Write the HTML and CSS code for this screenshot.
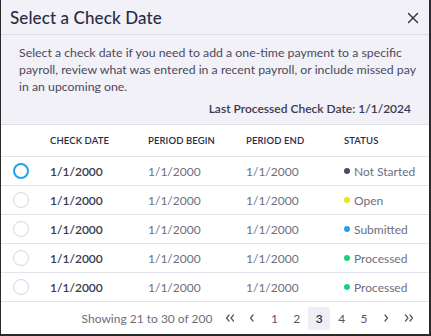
FILE: index.html
```html
<!DOCTYPE html>
<html>
<head>
<meta charset="utf-8">
<link rel="stylesheet" href="styles.css">
</head>
<body>
<div class="modal">
  <div class="head">
    <div class="titlebar">
      <h1 class="title">Select a Check Date</h1>
      <svg class="close" width="12" height="12" viewBox="0 0 12 12"><path d="M1.5 1.5L10.5 10.5M10.5 1.5L1.5 10.5" stroke="#2b2b45" stroke-width="1.4" stroke-linecap="round"/></svg>
    </div>
    <div class="intro">
      <p class="desc">Select a check date if you need to add a one-time payment to a specific payroll, review what was entered in a recent payroll, or include missed pay in an upcoming one.</p>
      <p class="last">Last Processed Check Date: 1/1/2024</p>
    </div>
  </div>
  <div class="table">
    <div class="row hrow">
      <span></span><span>CHECK DATE</span><span>PERIOD BEGIN</span><span>PERIOD END</span><span>STATUS</span>
    </div>
    <div class="row">
      <span class="radio on"></span><span class="b">1/1/2000</span><span>1/1/2000</span><span>1/1/2000</span><span class="st"><i class="dot ns"></i>Not Started</span>
    </div>
    <div class="row">
      <span class="radio"></span><span class="b">1/1/2000</span><span>1/1/2000</span><span>1/1/2000</span><span class="st"><i class="dot op"></i>Open</span>
    </div>
    <div class="row">
      <span class="radio"></span><span class="b">1/1/2000</span><span>1/1/2000</span><span>1/1/2000</span><span class="st"><i class="dot sb"></i>Submitted</span>
    </div>
    <div class="row">
      <span class="radio"></span><span class="b">1/1/2000</span><span>1/1/2000</span><span>1/1/2000</span><span class="st"><i class="dot pr"></i>Processed</span>
    </div>
    <div class="row">
      <span class="radio"></span><span class="b">1/1/2000</span><span>1/1/2000</span><span>1/1/2000</span><span class="st"><i class="dot pr"></i>Processed</span>
    </div>
  </div>
  <div class="footer">
    <span class="showing">Showing 21 to 30 of 200</span>
    <div class="pager">
      <span class="pg"><svg width="10" height="8" viewBox="0 0 10 8"><path d="M4 1L1.5 4L4 7M8.5 1L6 4L8.5 7" fill="none" stroke="#555568" stroke-width="1.2" stroke-linecap="round" stroke-linejoin="round"/></svg></span>
      <span class="pg"><svg width="6" height="8" viewBox="0 0 6 8"><path d="M4 1L1.5 4L4 7" fill="none" stroke="#555568" stroke-width="1.2" stroke-linecap="round" stroke-linejoin="round"/></svg></span>
      <span class="pg">1</span>
      <span class="pg">2</span>
      <span class="pg active">3</span>
      <span class="pg">4</span>
      <span class="pg">5</span>
      <span class="pg"><svg width="6" height="8" viewBox="0 0 6 8"><path d="M2 1L4.5 4L2 7" fill="none" stroke="#555568" stroke-width="1.2" stroke-linecap="round" stroke-linejoin="round"/></svg></span>
      <span class="pg"><svg width="10" height="8" viewBox="0 0 10 8"><path d="M1.5 1L4 4L1.5 7M6 1L8.5 4L6 7" fill="none" stroke="#555568" stroke-width="1.2" stroke-linecap="round" stroke-linejoin="round"/></svg></span>
    </div>
  </div>
</div>
</body>
</html>
```
FILE: styles.css
```css
* { box-sizing: border-box; }
html, body { margin: 0; padding: 0; }
body {
  width: 431px;
  height: 336px;
  font-family: "Lato", "Noto Sans", sans-serif;
  color: #2b2b45;
  background: #fff;
}
.modal {
  width: 431px;
  height: 336px;
  border-left: 1px solid #2a2a2a;
  border-right: 2px solid #2a2a2a;
  border-bottom: 2px solid #2a2a2a;
  display: flex;
  flex-direction: column;
  overflow: hidden;
}
.head {
  background: #f1f1f7;
  border-bottom: 1px solid #dedee8;
}
.titlebar {
  height: 35px;
  padding: 0 10px 0 9px;
  display: flex;
  align-items: center;
  justify-content: space-between;
  border-bottom: 1px solid #dcdce6;
}
.title {
  margin: 0;
  font-size: 17px;
  font-weight: 500;
  letter-spacing: 0.1px;
}
.close { margin-top: 1px; }
.intro {
  padding: 9px 12px 8px 18px;
}
.desc {
  margin: 0;
  font-size: 12.3px;
  line-height: 17px;
  color: #4a4a5e;
}
.last {
  margin: 6px 6px 0 0;
  text-align: right;
  font-size: 12px;
  font-weight: 600;
  color: #3a3a50;
}
.table { background: #fff; }
.row {
  display: grid;
  grid-template-columns: 49px 98px 98px 98px 1fr;
  align-items: center;
  height: 29px;
  border-bottom: 1px solid #e4e4ee;
  font-size: 12px;
  color: #6e6e80;
}
.hrow {
  height: 32px;
  font-size: 9.5px;
  font-weight: 600;
  color: #2b2b45;
  letter-spacing: 0.1px;
}
.b { font-weight: 600; color: #3a3a50; }
.radio {
  width: 16px;
  height: 16px;
  margin-left: 12px;
  border-radius: 50%;
  border: 1px solid #d6d6e2;
}
.radio.on { border: 2.5px solid #23a0ee; }
.st { display: flex; align-items: center; }
.dot {
  width: 6px;
  height: 6px;
  border-radius: 50%;
  margin-right: 4px;
}
.ns { background: #4a4a62; }
.op { background: #efe21d; }
.sb { background: #2a9cf0; }
.pr { background: #19d37c; }
.footer {
  flex: 1;
  display: flex;
  align-items: center;
  justify-content: flex-end;
  padding: 0 9px 0 0;
  font-size: 12px;
  color: #6e6e80;
}
.showing { margin-right: 6px; }
.pager { display: flex; align-items: center; }
.pg {
  width: 22.4px;
  height: 23px;
  display: flex;
  align-items: center;
  justify-content: center;
  border-radius: 3px;
  color: #555568;
}
.pg.active {
  background: #eeeff5;
  color: #2b2b45;
  font-weight: 600;
}
```
